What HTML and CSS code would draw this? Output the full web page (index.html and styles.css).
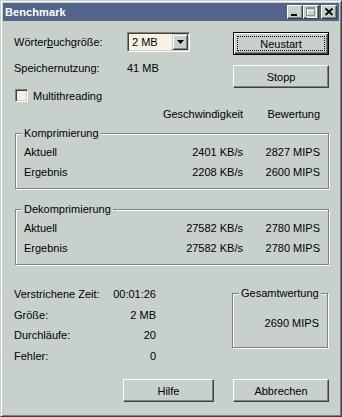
FILE: index.html
```html
<!DOCTYPE html>
<html lang="de">
<head>
<meta charset="utf-8">
<title>Benchmark</title>
<link rel="stylesheet" href="styles.css">
</head>
<body>
<div class="window">
  <div class="titlebar">
    <span class="title">Benchmark</span>
    <div class="caption-btns">
      <span class="cbtn"><svg width="14" height="12" viewBox="0 0 14 12"><rect x="3" y="8" width="6" height="2" fill="#000"/></svg></span>
      <span class="cbtn"><svg width="14" height="12" viewBox="0 0 14 12" shape-rendering="crispEdges"><path d="M3 2h9v9h-9z M3 4h9" fill="none" stroke="#fff" stroke-width="1" transform="translate(0.5 0.5)"/><path d="M2 1h8v8h-8z" fill="none" stroke="#8a9290" stroke-width="1" transform="translate(0.5 0.5)"/><rect x="2" y="1" width="9" height="2" fill="#8a9290"/></svg></span>
      <span class="cbtn close"><svg width="14" height="12" viewBox="0 0 14 12"><path d="M3.5 2.5l7 6.5M10.5 2.5l-7 6.5" stroke="#000" stroke-width="1.8" fill="none"/></svg></span>
    </div>
  </div>
  <div class="client">
    <div class="top">
      <div class="settings">
        <div class="srow">
          <span class="slabel">Wörter<u>b</u>uchgröße:</span>
          <div class="combo">
            <span class="combo-val">2 MB</span>
            <span class="combo-btn"><svg width="7" height="4" viewBox="0 0 7 4"><path d="M0 0h7l-3.5 4z" fill="#000"/></svg></span>
          </div>
        </div>
        <div class="srow gap6">
          <span class="slabel">Speichernutzung:</span>
          <span>41 MB</span>
        </div>
        <div class="crow">
          <span class="check"></span>
          <span>Multithreading</span>
        </div>
      </div>
      <div class="side-btns">
        <button class="btn default"><span class="focus">Neustart</span></button>
        <button class="btn">Stopp</button>
      </div>
    </div>

    <div class="grid3 head">
      <span></span>
      <span class="num">Geschwindigkeit</span>
      <span class="num">Bewertung</span>
    </div>

    <div class="group g1">
      <span class="legend">Komprimierung</span>
      <div class="grid3 rows">
        <span>Aktuell</span><span class="num">2401 KB/s</span><span class="num">2827 MIPS</span>
        <span>Ergebnis</span><span class="num">2208 KB/s</span><span class="num">2600 MIPS</span>
      </div>
    </div>

    <div class="group g2">
      <span class="legend">Dekomprimierung</span>
      <div class="grid3 rows">
        <span>Aktuell</span><span class="num">27582 KB/s</span><span class="num">2780 MIPS</span>
        <span>Ergebnis</span><span class="num">27582 KB/s</span><span class="num">2780 MIPS</span>
      </div>
    </div>

    <div class="bottom">
      <div class="stats">
        <span>Verstrichene Zeit:</span><span class="num">00:01:26</span>
        <span>Größe:</span><span class="num">2 MB</span>
        <span>Durchläufe:</span><span class="num">20</span>
        <span>Fehler:</span><span class="num">0</span>
      </div>
      <div class="group total">
        <span class="legend">Gesamtwertung</span>
        <div class="total-val">2690 MIPS</div>
      </div>
    </div>

    <div class="actions">
      <button class="btn help">Hilfe</button>
      <button class="btn">Abbrechen</button>
    </div>
  </div>
</div>
</body>
</html>
```

FILE: styles.css
```css
:root {
  --face: #c8d0cc;
  --dark: #808080;
  --darker: #404040;
  --cream: #fdf7e8;
}

* { box-sizing: border-box; }

html, body {
  margin: 0;
  padding: 0;
  background: var(--face);
}

body {
  font: 11px "Liberation Sans", Arial, sans-serif;
  color: #000;
}

.window {
  width: 342px;
  height: 417px;
  border: 1px solid;
  border-color: var(--face) var(--darker) var(--darker) var(--face);
  box-shadow: inset 1px 1px #fff, inset -1px -1px var(--dark);
  padding: 2px;
  background: var(--face);
  display: flex;
  flex-direction: column;
}

.titlebar {
  height: 18px;
  background: #52648c;
  display: flex;
  align-items: center;
  justify-content: space-between;
  padding: 0 2px 0 2px;
}

.title {
  color: #fff;
  font-weight: bold;
  font-size: 11px;
  letter-spacing: 0.1px;
}

.caption-btns {
  display: flex;
  align-items: center;
}

.cbtn {
  width: 16px;
  height: 14px;
  background: var(--face);
  border: 1px solid;
  border-color: #fff var(--darker) var(--darker) #fff;
  box-shadow: inset -1px -1px var(--dark);
  display: block;
}

.cbtn svg { display: block; }

.cbtn.close { margin-left: 2px; }

.client {
  flex: 1;
  padding: 0 10px 0 11px;
  display: flex;
  flex-direction: column;
}

.top {
  margin-top: 11px;
  display: flex;
  justify-content: space-between;
  align-items: flex-start;
}

.settings {
  display: flex;
  flex-direction: column;
}

.srow {
  height: 20px;
  display: flex;
  align-items: center;
}

.srow.gap6 { margin-top: 6px; }

.slabel {
  width: 113px;
}

.combo {
  width: 63px;
  height: 20px;
  border: 1px solid;
  border-color: var(--dark) #fff #fff var(--dark);
  box-shadow: inset 1px 1px var(--darker), inset -1px -1px var(--face);
  background-color: var(--cream);
  padding: 1px;
  display: flex;
  align-items: center;
}

.combo-val {
  flex: 1;
  padding-left: 2px;
  background: repeating-conic-gradient(#fffbf2 0 25%, #f6ecd6 0 50%) 0 0 / 2px 2px;
  align-self: stretch;
  display: flex;
  align-items: center;
  margin: 1px 0 1px 1px;
}

.combo-btn {
  width: 16px;
  height: 16px;
  background: var(--face);
  border: 1px solid;
  border-color: var(--face) var(--darker) var(--darker) var(--face);
  box-shadow: inset 1px 1px #fff, inset -1px -1px var(--dark);
  display: flex;
  align-items: center;
  justify-content: center;
}

.combo-btn svg { display: block; }

.crow {
  margin-top: 11px;
  height: 13px;
  display: flex;
  align-items: center;
  gap: 5px;
}

.check {
  width: 13px;
  height: 13px;
  margin-left: 1px;
  border: 1px solid;
  border-color: var(--dark) #fff #fff var(--dark);
  box-shadow: inset 1px 1px var(--darker), inset -1px -1px var(--face);
  background: repeating-conic-gradient(#fffbf2 0 25%, #f6ecd6 0 50%) 0 0 / 2px 2px;
}

.side-btns {
  display: flex;
  flex-direction: column;
  gap: 10px;
}

.btn {
  width: 96px;
  height: 23px;
  padding: 0;
  margin: 0;
  font: 11px "Liberation Sans", Arial, sans-serif;
  color: #000;
  background: var(--face);
  border: 1px solid;
  border-color: #fff var(--darker) var(--darker) #fff;
  box-shadow: inset -1px -1px var(--dark);
  display: flex;
  align-items: center;
  justify-content: center;
}

.btn.default {
  border-color: #000;
  box-shadow: inset 1px 1px #fff, inset -1px -1px var(--darker), inset -2px -2px var(--dark);
  padding: 3px;
  align-items: stretch;
}

.focus {
  flex: 1;
  border: 1px dotted #000;
  display: flex;
  align-items: center;
  justify-content: center;
}

.grid3 {
  display: grid;
  grid-template-columns: 1fr 100px 77px;
}

.num { text-align: right; }

.head {
  margin-top: 5px;
  line-height: 14px;
  padding-right: 9px;
}

.group {
  position: relative;
  border: 1px solid var(--dark);
  box-shadow: inset 1px 1px #fff, 1px 1px #fff;
}

.legend {
  position: absolute;
  top: -7px;
  left: 6px;
  padding: 0 2px;
  line-height: 13px;
  background: var(--face);
}

.g1, .g2 {
  margin-left: 1px;
  padding: 8px 8px 6px 8px;
}

.g1 { margin-top: 12px; }
.g2 { margin-top: 20px; }

.rows {
  grid-auto-rows: 20px;
  align-items: center;
}

.bottom {
  margin-top: 19px;
  display: flex;
  justify-content: space-between;
  align-items: flex-start;
}

.stats {
  width: 142px;
  display: grid;
  grid-template-columns: auto 1fr;
  grid-auto-rows: 20.5px;
  align-items: center;
}

.total {
  width: 96px;
  margin-top: 9px;
  margin-right: 1px;
  padding: 19px 8px 14px 8px;
}

.total-val {
  line-height: 20px;
  text-align: right;
}

.actions {
  margin-top: 13px;
  display: flex;
  justify-content: flex-end;
  gap: 19px;
}

.btn.help { width: 91px; }
```
